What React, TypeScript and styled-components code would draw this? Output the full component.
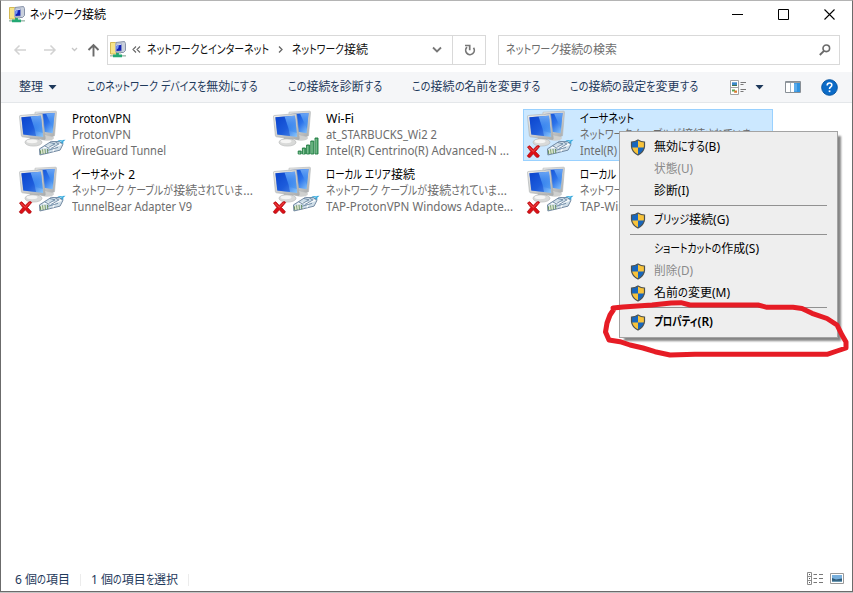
import React, { useLayoutEffect, useRef } from "react";
import styled, { createGlobalStyle } from "styled-components";

const Global = createGlobalStyle`
  * { box-sizing: border-box; }
  html, body { margin: 0; padding: 0; overflow: hidden; background: #fff; }
  body { font-family: "Noto Sans", "Noto Sans CJK JP", sans-serif; font-size: 12px; color: #000; }
`;

/* ---------- text with proportionally narrowed kana ---------- */

const Line = styled.span<{ $bold?: boolean }>`
  display: inline-flex;
  white-space: pre;
  line-height: 16px;
  height: 16px;
  flex: none;
  font-feature-settings: "palt";
  font-weight: ${(p) => (p.$bold ? 600 : 400)};
`;

const Run = styled.span`
  display: block;
  flex: none;
  height: 16px;
  transform-origin: 0 50%;
`;

const KANA = /([\u3040-\u30ff]+)/;

function Label({ text, width, bold }: { text: string; width: number; bold?: boolean }) {
  const ref = useRef<HTMLSpanElement>(null);
  const runs = text.split(KANA).filter(Boolean);

  useLayoutEffect(() => {
    const fit = () => {
      const spans = Array.from(ref.current!.children) as HTMLElement[];
      spans.forEach((s) => {
        s.style.width = "";
        s.style.transform = "";
      });
      const sizes = spans.map((s) => s.getBoundingClientRect().width);
      const flexible = spans.map((_, i) => KANA.test(runs[i]));
      const hasKana = flexible.some(Boolean);
      let fixed = 0;
      let loose = 0;
      sizes.forEach((w, i) => {
        if (hasKana && !flexible[i]) fixed += w;
        else loose += w;
      });
      const k = (width - fixed) / loose;
      spans.forEach((s, i) => {
        if (hasKana && !flexible[i]) return;
        s.style.width = `${sizes[i] * k}px`;
        s.style.transform = `scaleX(${k})`;
      });
    };
    fit();
    document.fonts?.ready.then(() => ref.current && fit());
  }, [text, width]);

  return (
    <Line ref={ref} $bold={bold}>
      {runs.map((r, i) => (
        <Run key={i}>{r}</Run>
      ))}
    </Line>
  );
}

/* ---------- window frame ---------- */

const Desktop = styled.div`
  position: relative;
  width: 853px;
  height: 593px;
  overflow: hidden;
  background: #c4c4c4;
`;

const Window = styled.div`
  display: flex;
  flex-direction: column;
  width: 853px;
  height: 592px;
  background: #fff;
  border: 1px solid #6b6b6b;
  border-top-color: #b4b4b4;
`;

const TitleBar = styled.header`
  display: flex;
  align-items: center;
  height: 27px;
  padding-left: 8px;
  gap: 5px;
`;

const Controls = styled.div`
  display: flex;
  margin-left: auto;
  height: 27px;
`;

const Control = styled.button`
  display: flex;
  align-items: center;
  justify-content: center;
  width: 46px;
  padding: 0;
  border: 0;
  background: none;
`;

const NavRow = styled.nav`
  display: flex;
  align-items: center;
  height: 43px;
  padding: 0 12px 0 11px;
`;

const NavIcon = styled.div<{ $w: number }>`
  display: flex;
  align-items: center;
  justify-content: center;
  width: ${(p) => p.$w}px;
  height: 28px;
  flex: none;

  svg { flex: none; }
`;

const UpIcon = styled(NavIcon)`
  padding-left: 4px;
`;

const Field = styled.div<{ $w: number; $dim?: boolean }>`
  display: flex;
  align-items: center;
  width: ${(p) => p.$w}px;
  height: 30px;
  border: 1px solid #d9d9d9;
  color: ${(p) => (p.$dim ? "#6d6d6d" : "#111")};
  flex: none;
`;

const AddressField = styled(Field)`
  padding-left: 2px;
`;

const SearchField = styled(Field)`
  justify-content: space-between;
  margin-left: 12px;
  padding: 0 8px 0 7px;
`;

const Push = styled.div`
  margin-left: auto;
  display: flex;
  align-items: center;
  height: 28px;
`;

const RefreshCell = styled.div`
  display: flex;
  align-items: center;
  justify-content: center;
  width: 33px;
  height: 28px;
  padding: 2px 0 0 2px;
  border-left: 1px solid #d9d9d9;
`;

const Toolbar = styled.div`
  display: flex;
  align-items: center;
  height: 31px;
  margin-top: 1px;
  padding: 0 14px 0 18px;
  background: #f5f6f8;
  border-bottom: 1px solid #e4e7ea;
  color: #1e395b;
`;

const Commands = styled.div`
  display: flex;
  align-items: center;
  gap: 30px;
`;

const Command = styled.div`
  display: flex;
  align-items: center;
  gap: 5px;
`;

const Tools = styled.div`
  display: flex;
  align-items: center;
  margin-left: auto;
`;

const Tool = styled.div<{ $gap: number }>`
  display: flex;
  margin-left: ${(p) => p.$gap}px;
`;

/* ---------- connection grid ---------- */

const Content = styled.main`
  flex: 1;
  padding: 6px 0 0 14px;
`;

const Grid = styled.div`
  display: grid;
  grid-template-columns: repeat(3, 254px);
  grid-auto-rows: 56px;
`;

const Tile = styled.div<{ $selected?: boolean }>`
  display: flex;
  margin-left: 0;
  width: 250px;
  height: 52px;
  border: 1px solid ${(p) => (p.$selected ? "#99d1ff" : "transparent")};
  background: ${(p) => (p.$selected ? "#cce8ff" : "transparent")};
`;

const TileIcon = styled.div`
  width: 57px;
  height: 50px;
  margin-left: -1px;
  flex: none;
`;

const TileText = styled.div`
  display: flex;
  flex-direction: column;
  padding-top: 1px;
  overflow: hidden;
  color: #6d6d6d;
`;

const TileName = styled.div`
  display: flex;
  color: #000;
`;

const StatusBar = styled.footer`
  display: flex;
  align-items: center;
  height: 23px;
  padding: 0 8px 0 14px;
  color: #1e395b;
`;

const StatusDivider = styled.div`
  width: 1px;
  height: 12px;
  margin: 0 10px 0 10px;
  background: #ececec;
`;

const StatusIcons = styled.div`
  display: flex;
  align-items: center;
  gap: 7px;
  margin: 0 0 3px auto;
`;

/* ---------- context menu ---------- */

const Menu = styled.div`
  position: absolute;
  left: 619px;
  top: 131px;
  width: 219px;
  height: 207px;
  padding: 4px 2px 2px;
  background: #eee;
  border: 1px solid #a3a3a3;
  box-shadow: 4px 4px 2px -1px rgba(0, 0, 0, 0.48);
`;

const MenuItem = styled.div<{ $disabled?: boolean }>`
  display: flex;
  align-items: center;
  height: 22px;
  color: ${(p) => (p.$disabled ? "#8a8a8a" : "#000")};
`;

const MenuIcon = styled.div`
  display: flex;
  width: 32px;
  padding-left: 8px;
  flex: none;
`;

const MenuRule = styled.div`
  height: 1px;
  margin: 3px 8px 3px 8px;
  background: #919191;
`;

const Marker = styled.svg`
  position: absolute;
  left: 595px;
  top: 295px;
`;

/* ---------- icons ---------- */

const NetFolder = () => (
  <svg width="16" height="17" viewBox="0 0 16 17">
    <path d="M.5 1.5h5l1 1v10.500h-6z" fill="#f6e489" stroke="#d3b955" />
    <path d="M6 1.500 14.500.5l1 2v7l-2 2H6z" fill="#c9d0dc" stroke="#8792a8" />
    <path d="M5.500 3.500l6-.8v7.500l-6 .3z" fill="#eef2ff" stroke="#9aa4be" strokeWidth=".7" />
    <path d="M6.300 4.700l5-1v6l-5 .2z" fill="#1222b4" />
    <path d="M6.300 4.700l2.600-.5-.6 3-2 1.500z" fill="#7a9cf4" />
    <path d="M7 10.500h4v2H7z" fill="#a3afb4" />
    <path d="M0 14.800h16" stroke="#a9c2b6" strokeWidth="1.600" />
    <path d="M3 14.800h9M7.500 12v3" stroke="#23a873" strokeWidth="2.800" />
  </svg>
);

const Computers = ({ broken, wifi }: { broken?: boolean; wifi?: boolean }) => (
  <svg width="56" height="50" viewBox="0 0 56 50">
    <defs>
      <linearGradient id="scr" x1="0" y1="0" x2="1" y2="1">
        <stop offset="0" stopColor="#0b46cf" />
        <stop offset=".55" stopColor="#2c73ea" />
        <stop offset="1" stopColor="#8cc9fb" />
      </linearGradient>
      <linearGradient id="gls" x1="0" y1="0" x2="0" y2="1">
        <stop offset="0" stopColor="#6aa5f5" />
        <stop offset="1" stopColor="#2f86ee" stopOpacity=".4" />
      </linearGradient>
      <linearGradient id="metal" x1="0" y1="0" x2="1" y2="1">
        <stop offset="0" stopColor="#f1f1ef" />
        <stop offset="1" stopColor="#a9abac" />
      </linearGradient>
    </defs>
    <ellipse cx="32" cy="28" rx="7" ry="2.800" fill="#cfd0cf" />
    <path d="M20 2.200 40.400 1.200q1.200 0 1.100 1.100L39.500 25.800l-1.800.6L20 23z" fill="url(#metal)" stroke="#b2b5b7" strokeWidth=".6" />
    <path d="M21.500 4 39.500 3.100 37.700 23.300 21.500 20.500z" fill="url(#scr)" />
    <path d="M31 3.600l8.500-.5-1.500 16z" fill="url(#gls)" />
    <path d="M14.500 25.500l9 1.500.8 4.500h-9z" fill="#b9bab9" />
    <ellipse cx="18.500" cy="32.300" rx="8.500" ry="3.800" fill="#d9dad9" stroke="#b4b6b5" strokeWidth=".6" />
    <ellipse cx="17" cy="31.300" rx="5.500" ry="1.900" fill="#f5f5f4" />
    <path d="M5.300 5.500 26.500 3.700q1-.1 1.100 1L30.300 28.500q.1 1.300-1.200 1.100L7.500 26.800q-1-.2-1.100-1.200L4.500 6.500q0-1 .8-1z" fill="url(#metal)" stroke="#a8acae" strokeWidth=".6" />
    <path d="M6.400 7.200 25.900 5.700 28.200 27 8.300 24.500z" fill="url(#scr)" />
    <path d="M15.500 6.500 25.900 5.700l1.900 17.200-7.800-2.100z" fill="url(#gls)" />
    <path d="M15.500 6.500 19.500 18.500l1.500 7.600-12.700-1.600L6.400 7.200z" fill="#0b40ca" opacity=".45" />
    {wifi ? (
      <g transform="translate(1.700 0)" fill="#4fa36c" stroke="#1f7c42" strokeWidth=".9">
        <path d="M27.500 41h3v3h-3zM31.700 38h3v6h-3zM35.900 35h3v9h-3zM40.100 31h3v13h-3zM44.300 28h3v16h-3z" />
        <path d="M28.600 42v2M32.800 39v5M37 36v7.500M41.200 32v11.500M45.400 29v14.500" stroke="#9bd2a9" strokeWidth=".7" />
      </g>
    ) : (
      <g transform="translate(3.900 2) scale(.84 .97)">
        <path d="M42.500 31.500l5-2.300 8-.7-3 2.500 1 1.300-7 2.500z" fill="#38a8dc" />
        <path d="M45 32l7-2.500" stroke="#a5e4f8" />
        <path d="M24.500 38 38.500 30.300l10 .4 4 2.600-3.500 6L36.500 42l-11.500 2.300z" fill="#cfdee8" stroke="#68809a" />
        <path d="M29 37l14-1.500 7.500-2.200M43 35.700l-2.500 5" stroke="#fff" strokeWidth="1.400" fill="none" />
        <path d="M37 31.500l6 1.300-7.500 3.700M43.500 31l4 2-9 4.500M34.500 39.500l12-3M31 35l5 2.500" stroke="#5f7d9a" strokeWidth=".9" fill="none" />
        <path d="M25.500 39.500l.5 4M28.200 38.500l.6 4.800M31 38l.5 5M34 38l.4 4.500" stroke="#5f8a52" />
        <path d="M27 39l.5 4M29.700 38.500l.5 4" stroke="#f2f3bd" strokeWidth=".9" />
      </g>
    )}
    {broken && (
      <g>
        <path d="M4.500 37q2-2.700 4 .5l1.700 2 3.500-3.500q2-1 3 .5l-4.200 5 3.800 4q0 2.300-2.800 1.800l-3.200-3.500-3 3.500q-2.500.5-3-1.500l3.500-4.200z" fill="#dc1017" stroke="#a9080d" strokeWidth=".7" />
        <path d="M5.500 36.900l4.700 4.500 4.800-4.700" stroke="#f25b57" strokeWidth=".9" fill="none" />
      </g>
    )}
  </svg>
);

const Shield = () => (
  <svg width="16" height="17" viewBox="0 0 16 17">
    <path d="M8 1Q5 3 1.500 3v4.500Q2 13 8 16z" fill="#1766bd" />
    <path d="M8 1q3 2 6.500 2v4.500Q14 13 8 16z" fill="#f8c33a" />
    <path d="M1.500 8.500H8V16Q2.500 13 1.500 8.500z" fill="#f8c33a" />
    <path d="M14.500 8.500H8V16q5.500-3 6.500-7.500z" fill="#1766bd" />
    <path d="M8 1Q5 3 1.500 3v4.500Q2 13 8 16q6-3 6.500-8.500V3Q11 3 8 1z" fill="none" stroke="#4c5150" strokeWidth="1.200" />
  </svg>
);

const Caret = () => (
  <svg width="9" height="5" viewBox="0 0 9 5"><path d="M.5 0h8l-4 4.600z" fill="#1e395b" /></svg>
);

const tiles = [
  { name: ["ProtonVPN", 59], status: ["ProtonVPN", 59], device: ["WireGuard Tunnel", 94] },
  { name: ["Wi-Fi", 28], status: ["at_STARBUCKS_Wi2 2", 111], device: ["Intel(R) Centrino(R) Advanced-N ...", 183], wifi: true },
  { name: ["イーサネット", 54], status: ["ネットワーク ケーブルが接続されていま...", 181], device: ["Intel(R)", 37], broken: true, selected: true },
  { name: ["イーサネット 2", 63], status: ["ネットワーク ケーブルが接続されていま...", 181], device: ["TunnelBear Adapter V9", 120], broken: true },
  { name: ["ローカル エリア接続", 89], status: ["ネットワーク ケーブルが接続されていま...", 181], device: ["TAP-ProtonVPN Windows Adapte...", 187], broken: true },
  { name: ["ローカル エリア接続", 89], status: ["ネットワーク ケーブルが接続されていま...", 181], device: ["TAP-Windows Adapter V9", 139], broken: true },
] as {
  name: [string, number]; status: [string, number]; device: [string, number];
  wifi?: boolean; broken?: boolean; selected?: boolean;
}[];

const menu: ({ text: string; width: number; shield?: boolean; disabled?: boolean; bold?: boolean } | null)[] = [
  { text: "無効にする(B)", width: 66, shield: true },
  { text: "状態(U)", width: 39, disabled: true },
  { text: "診断(I)", width: 35 },
  null,
  { text: "ブリッジ接続(G)", width: 75, shield: true },
  null,
  { text: "ショートカットの作成(S)", width: 105 },
  { text: "削除(D)", width: 39, shield: true, disabled: true },
  { text: "名前の変更(M)", width: 76, shield: true },
  null,
  { text: "プロパティ(R)", width: 59, shield: true, bold: true },
];

export default function App() {
  return (
    <Desktop>
      <Global />
      <Window>
        <TitleBar>
          <NetFolder />
          <Label text="ネットワーク接続" width={76} />
          <Controls>
            <Control><svg width="11" height="11"><path d="M0 5.500h11" stroke="#000" /></svg></Control>
            <Control><svg width="11" height="11"><path d="M.5.5h10v10H.5z" fill="none" stroke="#000" /></svg></Control>
            <Control><svg width="11" height="11"><path d="M.5.5l10 10M10.500.5l-10 10" stroke="#000" strokeWidth="1.100" /></svg></Control>
          </Controls>
        </TitleBar>

        <NavRow>
          <NavIcon $w={16}>
            <svg width="14" height="12" viewBox="0 0 14 12"><path d="M13 6H2M6.500 1.500 2 6l4.500 4.500" fill="none" stroke="#d2d2d2" strokeWidth="1.500" /></svg>
          </NavIcon>
          <NavIcon $w={44}>
            <svg width="14" height="12" viewBox="0 0 14 12"><path d="M1 6h11M7.500 1.500 12 6l-4.500 4.500" fill="none" stroke="#d2d2d2" strokeWidth="1.500" /></svg>
          </NavIcon>
          <NavIcon $w={4}>
            <svg width="7" height="5" viewBox="0 0 7 5"><path d="M1 1l2.500 2.500L6 1" fill="none" stroke="#c6c6c6" strokeWidth="1.300" /></svg>
          </NavIcon>
          <UpIcon $w={31}>
            <svg width="13" height="14" viewBox="0 0 13 14"><path d="M6.500 13.500V2M1.500 7l5-5 5 5" fill="none" stroke="#6b6b6b" strokeWidth="1.900" /></svg>
          </UpIcon>
          <AddressField $w={379}>
            <NetFolder />
            <NavIcon $w={21}>
              <svg width="9" height="7" viewBox="0 0 9 7"><path d="M4 .5l-3 3 3 3M8 .5l-3 3 3 3" fill="none" stroke="#666" strokeWidth="1.100" /></svg>
            </NavIcon>
            <Label text="ネットワークとインターネット" width={122} />
            <NavIcon $w={23}>
              <svg width="5" height="7" viewBox="0 0 5 7"><path d="M1 .5l3 3-3 3" fill="none" stroke="#666" strokeWidth="1.300" /></svg>
            </NavIcon>
            <Label text="ネットワーク接続" width={76} />
            <Push>
              <NavIcon $w={31}>
                <svg width="10" height="7" viewBox="0 0 10 7"><path d="M1 1.500l4 4 4-4" fill="none" stroke="#777" strokeWidth="1.800" /></svg>
              </NavIcon>
              <RefreshCell>
                <svg width="12" height="13" viewBox="0 0 12 13">
                  <path d="M3 3.200A4.300 4.300 0 1 0 9.500 3.800" fill="none" stroke="#777" strokeWidth="1.700" />
                  <path d="M1 1.500h4.700v4.700" fill="none" stroke="#777" strokeWidth="1.700" />
                </svg>
              </RefreshCell>
            </Push>
          </AddressField>
          <SearchField $w={342} $dim>
            <Label text="ネットワーク接続の検索" width={111} />
            <svg width="12" height="12" viewBox="0 0 12 12">
              <circle cx="7.300" cy="4.300" r="3.300" fill="none" stroke="#6a6a6a" strokeWidth="1.600" />
              <path d="M5 6.800.8 11" stroke="#6a6a6a" strokeWidth="1.900" />
            </svg>
          </SearchField>
        </NavRow>

        <Toolbar>
          <Commands>
            <Command><Label text="整理" width={24} /><Caret /></Command>
            <Command><Label text="このネットワーク デバイスを無効にする" width={171} /></Command>
            <Command><Label text="この接続を診断する" width={94} /></Command>
            <Command><Label text="この接続の名前を変更する" width={128} /></Command>
            <Command><Label text="この接続の設定を変更する" width={128} /></Command>
          </Commands>
          <Tools>
            <Tool $gap={0}>
              <svg width="16" height="15" viewBox="0 0 16 15">
                <path d="M.5.5h8v14h-8zM.5 7.500h8" fill="#fff" stroke="#a2a2a2" />
                <path d="M2 2.300h5v3.500H2z" fill="#3d88c9" />
                <path d="M2 5h5v1H2z" fill="#3f704c" />
                <path d="M2 9.500h3v2H2z" fill="#58a954" />
                <path d="M4.500 10.500H7v2.300H4z" fill="#dc7931" />
                <path d="M10.500 2.500H16M10.500 4.500h3M10.500 9.500H16M10.500 11.500h3" stroke="#777" />
              </svg>
            </Tool>
            <Tool $gap={9}><Caret /></Tool>
            <Tool $gap={21}>
              <svg width="16" height="12" viewBox="0 0 16 12">
                <path d="M.5.5h15v11H.5z" fill="#fff" stroke="#888f96" />
                <path d="M1 1.500h14" stroke="#969ca1" />
                <path d="M5.500 2v9" stroke="#a1b7c9" />
                <path d="M9 2h6v9H9z" fill="#2f93e0" />
                <path d="M9 2.500h3v8H9z" fill="#5cabea" />
              </svg>
            </Tool>
            <Tool $gap={20}>
              <svg width="17" height="17" viewBox="0 0 17 17">
                <circle cx="8.500" cy="8.500" r="7.800" fill="#0b6bc8" stroke="#0755a0" />
                <path d="M6.200 6.400q0-2.400 2.300-2.400t2.300 2q0 1.300-1.200 2-1.100.7-1.100 2" fill="none" stroke="#fff" strokeWidth="1.600" />
                <path d="M7.700 11.400h1.700v1.700H7.700z" fill="#fff" />
              </svg>
            </Tool>
          </Tools>
        </Toolbar>

        <Content>
          <Grid>
            {tiles.map((t, i) => (
              <Tile key={i} $selected={t.selected}>
                <TileIcon><Computers broken={t.broken} wifi={t.wifi} /></TileIcon>
                <TileText>
                  <TileName><Label text={t.name[0]} width={t.name[1]} /></TileName>
                  <Label text={t.status[0]} width={t.status[1]} />
                  <Label text={t.device[0]} width={t.device[1]} />
                </TileText>
              </Tile>
            ))}
          </Grid>
        </Content>

        <StatusBar>
          <Label text="6 個の項目" width={55} />
          <StatusDivider />
          <Label text="1 個の項目を選択" width={87} />
          <StatusDivider />
          <StatusIcons>
            <svg width="16" height="13" viewBox="0 0 16 13">
              <path d="M.5.5h4v12h-4zM.5 4.500h4M.5 8.500h4" fill="#fff" stroke="#8c8c8c" />
              <path d="M2 2.500h1M2 6.500h1M2 10.500h1" stroke="#555" />
              <path d="M6.500 2.500H10M12 2.500h4M6.500 6.500H10M12 6.500h4M6.500 10.500H10M12 10.500h4" stroke="#777" />
            </svg>
            <svg width="14" height="11" viewBox="0 0 14 11">
              <path d="M.5.5h13v10H.5z" fill="#fff" stroke="#999" />
              <path d="M2 2h10v7H2z" fill="#78afdc" />
              <path d="M2 5l4 1.500 6-1V9H2z" fill="#2d5a78" />
              <path d="M2 7.800h10V9H2z" fill="#6c9ab4" />
            </svg>
          </StatusIcons>
        </StatusBar>
      </Window>

      <Menu>
        {menu.map((m, i) =>
          m ? (
            <MenuItem key={i} $disabled={m.disabled}>
              <MenuIcon>{m.shield && <Shield />}</MenuIcon>
              <Label text={m.text} width={m.width} bold={m.bold} />
            </MenuItem>
          ) : (
            <MenuRule key={i} />
          )
        )}
      </Menu>

      <Marker width="258" height="68" viewBox="0 0 258 68">
        <path
          d="M18 13L28 12 57 10 76 8 86 7.700 95 10H163L172 12.300H198L207 13.500 217 18.300 232 23.500 242 30 247 40 251 47V53L242 56 232 59.300H100L75 60 60 56.700 48 53 35 50 25 46.700 14 45 10.500 37 12 28 15 20 19 14"
          fill="none" stroke="#e61c25" strokeWidth="5" strokeLinecap="round" strokeLinejoin="round"
        />
      </Marker>
    </Desktop>
  );
}
